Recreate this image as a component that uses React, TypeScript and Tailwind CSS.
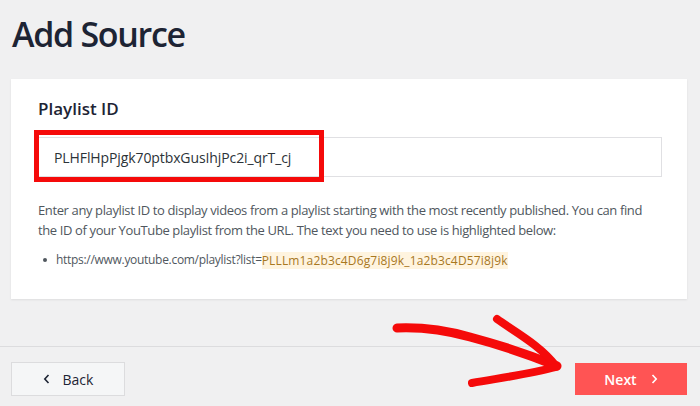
import React from "react";

export default function App() {
  return (
    <div className="relative w-[700px] h-[406px] overflow-hidden bg-[#f0f0f1] font-['Open_Sans',sans-serif]">
      <h1 className="pl-3 pt-[13px] text-[34px] leading-[42px] font-semibold text-[#1d2434] tracking-[-1.3px]">
        Add Source
      </h1>

      <div className="ml-[11px] mr-[13px] mt-[24px] bg-white pl-[27px] pr-[25px] pt-[18px] pb-[29px] shadow-[0_1px_2px_rgba(0,0,0,0.08)]">
        <div className="text-[17px] leading-[24px] font-semibold text-[#1d2434]">Playlist ID</div>

        <div className="relative mt-[16px] h-[40px] border border-[#e0e0e3] flex items-center pl-[15px]">
          <span className="text-[14px] text-[#2c3338] tracking-[-0.1px]">PLHFlHpPjgk70ptbxGusIhjPc2i_qrT_cj</span>
          <div className="absolute -left-[5px] -top-[8px] w-[290px] h-[52px] border-[5px] border-[#f50a0a] pointer-events-none" />
        </div>

        <p className="mt-[23px] max-w-[612px] text-[13px] leading-[20px] text-[#50575e] tracking-[-0.38px]">
          Enter any playlist ID to display videos from a playlist starting with the most recently published. You can find the ID of your YouTube playlist from the URL. The text you need to use is highlighted below:
        </p>

        <div className="mt-[10px] flex items-center text-[12px] leading-[20px] text-[#50575e]">
          <span className="ml-[5px] mr-[9px] w-[4px] h-[4px] rounded-full bg-[#50575e]" />
          <span className="tracking-[-0.3px]">https://www.youtube.com/playlist?list=</span>
          <span className="bg-[#fff4df] text-[#a8781f] leading-[15px] py-[1px] tracking-[0.15px]">PLLLm1a2b3c4D6g7i8j9k_1a2b3c4D57i8j9k</span>
        </div>
      </div>

      <div className="mt-[47px] border-t border-[#dcdcde] pl-[11px] pr-[13px] pt-[15px] flex items-center justify-between">
        <button className="w-[114px] h-[34px] bg-[#f5f6f7] border border-[#dcdcde] flex items-center justify-center gap-[13px] text-[14px] font-medium text-[#1d2434]">
          <svg width="7" height="10" viewBox="0 0 7 10" fill="none">
            <path d="M5.5 1 L1.8 5 L5.5 9" stroke="#1d2434" strokeWidth="1.6" />
          </svg>
          <span>Back</span>
        </button>
        <button className="w-[112px] h-[32px] bg-[#ff5454] flex items-center justify-center gap-[14px] text-[14px] font-semibold text-white">
          <span>Next</span>
          <svg width="7" height="10" viewBox="0 0 7 10" fill="none">
            <path d="M1.5 1 L5.2 5 L1.5 9" stroke="#ffffff" strokeWidth="1.6" />
          </svg>
        </button>
      </div>

      <svg className="absolute inset-0 pointer-events-none" width="700" height="406" viewBox="0 0 700 406" fill="none">
        <path
          d="M397 328 C 420 327, 445 330, 470 337 C 500 345, 530 355, 557 366"
          stroke="#f50a0a"
          strokeWidth="9"
          strokeLinecap="round"
          strokeLinejoin="round"
        />
        <path
          d="M497 319 C 515 332, 540 345, 556 366"
          stroke="#f50a0a"
          strokeWidth="8"
          strokeLinecap="round"
          strokeLinejoin="round"
        />
        <path
          d="M556 367 C 530 374, 500 378, 472 383"
          stroke="#f50a0a"
          strokeWidth="8"
          strokeLinecap="round"
          strokeLinejoin="round"
        />
      </svg>
    </div>
  );
}
